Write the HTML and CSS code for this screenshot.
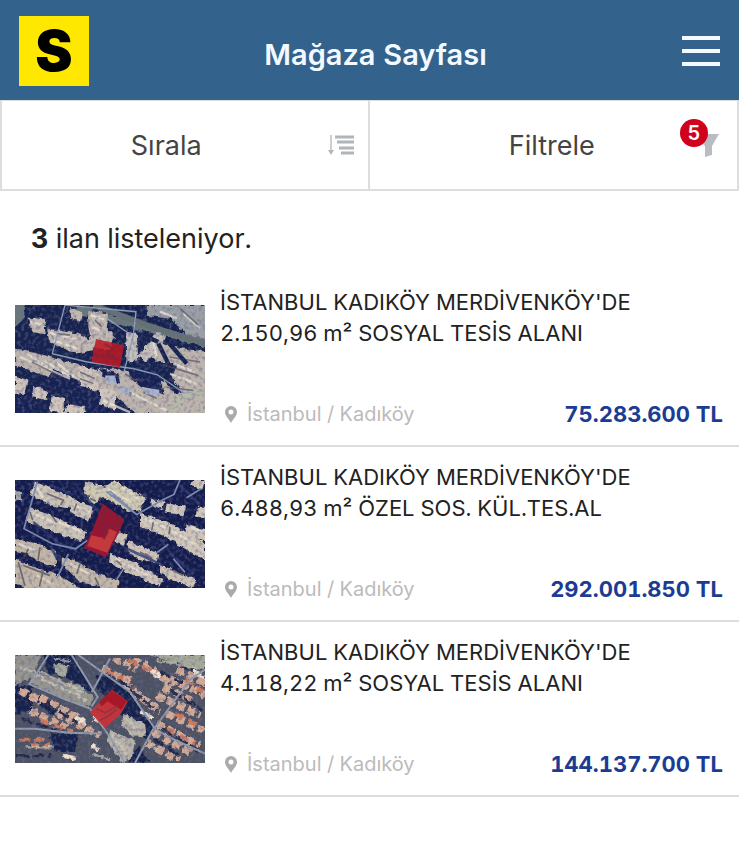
FILE: index.html
```html
<!DOCTYPE html>
<html lang="tr">
<head>
    <meta charset="UTF-8" />
    <title>Mağaza Sayfası</title>
    <meta name="viewport" content="width=device-width, initial-scale=1" />
    <link rel="stylesheet" href="styles.css">
</head>
<body>
    <header class="topbar">
        <a class="logo" href="#">S</a>
        <h1>Mağaza Sayfası</h1>
        <button class="menu-button" type="button" aria-label="Menü">
            <span></span>
            <span></span>
            <span></span>
        </button>
    </header>

    <div class="toolbar">
        <button class="tool" type="button">
            <span class="tool-label">Sırala</span>
            <svg class="tool-icon" width="28" height="22" viewBox="0 0 28 22" aria-hidden="true">
                <path d="M4 1v16" stroke="#cdcfd2" stroke-width="2" />
                <path d="M1 16h6l-3 5z" fill="#b4b6ba" />
                <path d="M8 3h19M10 8h17M12 14h15M14 19h13" stroke="#b1b4b8" stroke-width="3" />
            </svg>
        </button>
        <button class="tool" type="button">
            <span class="tool-label">Filtrele</span>
            <span class="tool-icon filter-icon">
                <svg width="28" height="22" viewBox="0 0 28 22" aria-hidden="true">
                    <path d="M1 0h26l-7 12v9l-7 2V12z" fill="#b9bcc0" />
                </svg>
                <span class="badge">5</span>
            </span>
        </button>
    </div>

    <main>
        <p class="result-count"><strong>3</strong> ilan listeleniyor.</p>

        <ul class="listings">
            <li class="listing">
                <svg class="thumb" viewBox="15 15 570 322" preserveAspectRatio="none" role="img" aria-label="Uydu görüntüsü">
                    <defs>
                        <filter id="rough" x="0" y="0" width="100%" height="100%">
                            <feTurbulence type="fractalNoise" baseFrequency="0.07" numOctaves="2" seed="4" result="n" />
                            <feDisplacementMap in="SourceGraphic" in2="n" scale="16" xChannelSelector="R" yChannelSelector="G" />
                        </filter>
                        <filter id="grain" x="0" y="0" width="100%" height="100%">
                            <feTurbulence type="fractalNoise" baseFrequency="0.09" numOctaves="2" seed="9" />
                            <feColorMatrix values="0 0 0 0 0.14  0 0 0 0 0.14  0 0 0 0 0.28  3 0 0 0 -1.4" />
                        </filter>
                    </defs>
                    <rect width="600" height="352" fill="#17234f" />
                    <g filter="url(#rough)">
                        <path d="M0 0h48L40 60 15 80zM200 15L450 85 600 120V145L470 110 330 75 200 40z" fill="#6b787a" />
                        <path d="M410 15h190v105l-70-15-45-48-75-10z" fill="#9aa0a4" />
                        <path d="M430 120l90 25 80 10v185H380l-60-50-60-10-50-35-80-10L15 195v-50l70 15 90 25 60 20 90 0 80 20 60 20 30 35 20-5-30-45 20-40-60-5-50-30z" fill="#bdb4ac" />
                        <path d="M355 200l85 8 25 75-70-25-35-25zM130 205l70 30 70 40 10 55-45 5-50-50-75-35zM270 205l55 15 5 30-45-15zM15 255l50 20 10 62H15z" fill="#172452" />
                        <path d="M235 30l60 10-5 45 25 25-15 40-55-10-10-60zM112 85l90 15 45 20v30l-50 10-80-35zM52 52l50 5 5 45-35-5-12-25zM180 22l38 15-4 28-30-8z" fill="#c2b9b0" />
                        <path d="M345 95l35 5 5 80-35 5zM440 95l28 15-18 40-45 35-25-20 30-25z" fill="#c6c0ba" />
                        <path d="M15 225l40 15-8 38-32 5zM70 255l40 15 2 28-45-8zM125 285l40 10-2 40h-45zM175 310l48 10 5 17h-65zM270 255l50 20-5 55-45-18zM205 195l60 15-5 65-50-20z" fill="#d0c5bb" />
                    </g>
                    <g stroke="#ece5da" stroke-width="7" fill="none" opacity=".75">
                        <path d="M60 65l35 8M120 98l80 20M130 120l72 25M240 45l42 12M245 80l25 10M30 170l150 65M50 160l65 42M100 178l80 52M140 188l60 46M280 300l80 35M350 270l80 40M390 290l80 40M490 190l65 25M480 220l80 30M430 120l10 55M520 40l50 45M450 35l50 20" />
                    </g>
                    <g stroke="#4c4a57" stroke-width="5" fill="none" opacity=".65">
                        <path d="M65 185l90 45M210 215l45 20M210 235l40 14M345 220l35 20M335 265l30 14M400 275l40 18M470 260l80 10M465 195l100 30M480 170l90 15M140 100l40 5M255 60l20 20M510 25l55 50" />
                    </g>
                    <path d="M285 225h30l6 28-32-8zM330 255l30 8-3 18-30-8zM400 260l48 8v18l-40-6z" fill="#a9b4cc" />
                    <path d="M470 120l60 70M445 130l30 60M400 105l45 20" stroke="#17234f" stroke-width="13" />
                    <path d="M250 15l175 65 95 30 80 24" stroke="#657173" stroke-width="17" fill="none" />
                    <path d="M165 15L127 160l105 25 140 20 70 18 82 55 76-4M127 160l38-145 213 20-8 70-28 110M290 55l75 50" stroke="#8e9fb8" stroke-width="4" fill="none" />
                    <path d="M585 275l-72 12-23 50" stroke="#b4bca5" stroke-width="12" fill="none" />
                    <rect width="600" height="352" filter="url(#grain)" opacity=".55" />
                    <path d="M258 116l84 20-12 65-86-17z" fill="#b91926" fill-opacity=".88" />
                    <path d="M285 132l22 12-14 18 22 8M250 162l74 16" stroke="#812235" stroke-width="7" fill="none" opacity=".7" />
                </svg>
                <div class="details">
                    <a class="title" href="#">İSTANBUL KADIKÖY MERDİVENKÖY'DE 2.150,96 m² SOSYAL TESİS ALANI</a>
                    <div class="meta">
                        <span class="location">
                            <svg width="12" height="17" viewBox="0 0 12 17" aria-hidden="true">
                                <path fill-rule="evenodd" d="M6 0a6 6 0 0 0-6 6c0 4 4 7 6 11 2-4 6-7 6-11a6 6 0 0 0-6-6zm0 3.5a2.5 2.5 0 1 1 0 5 2.5 2.5 0 0 1 0-5z" fill="#aaa" />
                            </svg>
                            İstanbul / Kadıköy
                        </span>
                        <strong class="price">75.283.600 TL</strong>
                    </div>
                </div>
            </li>

            <li class="listing">
                <svg class="thumb" viewBox="15 15 570 322" preserveAspectRatio="none" role="img" aria-label="Uydu görüntüsü">
                    <rect width="600" height="352" fill="#131c4c" />
                    <g filter="url(#rough)">
                        <path d="M75 20l60 25 60 25-15 30-50-8-68-30zM185 75l65 20-12 45-58-30zM60 98l70 25 100 45-18 32-85-32-82-30z" fill="#cbc4b6" />
                        <path d="M225 20l60 15 30-20 50 30 42 25-18 35-32 5-65-38-70-15zM235 55l35 5-8 25-25-5z" fill="#cfc8b1" />
                        <path d="M390 115l45 15 60 20 35 25 55 30v50l-60-35-65-40-70-25zM530 145l60 20v35l-65-20zM470 85l58 10-8 25-55-8zM420 70l45 10-8 22-32-12zM545 15h40l-8 28-37-12zM565 95h30v40l-38-15z" fill="#d0c7ba" />
                        <path d="M310 165l40 15-8 28-40-15zM355 195l90 40-5 28-60-15-30-25zM450 265l110 50-15 22-50-20-45-25zM300 235l70 25 90 50-8 22-75-30-80-40z" fill="#cec3b6" />
                        <path d="M15 190l55 12 65 25 5 45-45-10-50-30-30-5zM155 245l50 15 60 35 60 20v30l-115-25-55-55zM15 250l50 22 90 30 60 40H60l-45-20z" fill="#c2b6a7" />
                        <path d="M15 45l20 10 2 25-22-5z" fill="#a7a9ad" />
                    </g>
                    <g stroke="#eee7d6" stroke-width="7" fill="none" opacity=".65">
                        <path d="M80 35l25 45M190 90l50 20M70 115l65 28M145 140l70 30M290 40l80 45M335 35l50 35M405 130l65 28M485 165l70 42M540 155l45 18M315 250l110 55M25 205l50 20M180 265l60 32M80 300l50 25" />
                    </g>
                    <g stroke="#4a4650" stroke-width="5" fill="none" opacity=".7">
                        <path d="M110 55l50 20-8 15M125 120l15 22M60 110l8 25M200 85l-8 22M240 70l18 8M300 60l32 12M430 140l-5 25M480 155l-3 22M390 230l28 15M405 235l22 14M480 280l40 20M55 220l-15 30M90 215l-6 40M40 270l80 30M25 260l20 70M100 285l-12 48M210 265l-10 30M255 305l12 25M320 255l15 15" />
                    </g>
                    <g stroke="#28366e" stroke-width="8" fill="none" opacity=".8">
                        <path d="M70 140l80 65 50 20M200 35l70 80M510 30l60 60M120 30l70 30M340 215l120 55M120 210l25 45M450 190l60 80M500 250l50 45" />
                    </g>
                    <path d="M82 20L42 160l85 45 70 15 35-25M290 50l90 68 80-45 32-15 18-43M380 118l-80-70M175 235l-35 75M530 68l45-28M440 232l35-25M490 250l35 40M320 312l20-32" stroke="#8190b2" stroke-width="5" fill="none" />
                    <rect width="600" height="352" filter="url(#grain)" opacity=".5" />
                    <path d="M278 85l65 48-18 42-38 70-65-27 28-60z" fill="#9e1532" fill-opacity=".93" />
                    <path d="M298 160l22 10-28 62-60-20 12-32 36 8z" fill="#cf423e" opacity=".8" />
                    <path d="M285 102l46 32-15 25-42-18zM265 150l28 20-12 22" stroke="#79233e" stroke-width="5" fill="none" />
                </svg>
                <div class="details">
                    <a class="title" href="#">İSTANBUL KADIKÖY MERDİVENKÖY'DE 6.488,93 m² ÖZEL SOS. KÜL.TES.AL</a>
                    <div class="meta">
                        <span class="location">
                            <svg width="12" height="17" viewBox="0 0 12 17" aria-hidden="true">
                                <path fill-rule="evenodd" d="M6 0a6 6 0 0 0-6 6c0 4 4 7 6 11 2-4 6-7 6-11a6 6 0 0 0-6-6zm0 3.5a2.5 2.5 0 1 1 0 5 2.5 2.5 0 0 1 0-5z" fill="#aaa" />
                            </svg>
                            İstanbul / Kadıköy
                        </span>
                        <strong class="price">292.001.850 TL</strong>
                    </div>
                </div>
            </li>

            <li class="listing">
                <svg class="thumb" viewBox="15 15 570 322" preserveAspectRatio="none" role="img" aria-label="Uydu görüntüsü">
                    <rect width="600" height="352" fill="#4d5263" />
                    <g filter="url(#rough)">
                        <path d="M100 15h90l60 115-75-45-60-15zM260 75l50 10 60 55 60 85-20 45-85-85-65-70zM15 100l50 10 5 65-55 20zM90 130l55 25-15 45-48-45zM120 245l85 10-10 50-60-5zM385 285l40 50h-70z" fill="#17234c" />
                        <path d="M15 15h80l-35 70-45 20zM60 60l80 30 110 45-10 35-75-20-100-50z" fill="#96958e" />
                        <path d="M130 40l45 5-8 35-35-10zM180 95l45 20-10 30-40-15zM420 15h165v45l-90-20z" fill="#a6aa98" />
                        <path d="M340 190l65 30 5 35-45 5-30-40zM300 240l75 30-10 55-30 10-45-65z" fill="#b9b4a7" />
                    </g>
                    <!-- rooftops, drawn as dashed rows -->
                    <g filter="url(#rough)" fill="none">
                        <path d="M275 55l85 40M340 100l110 85M370 25l120 80M310 25l70 30M500 60l85 40M480 85l105 50M460 110l90 45M440 135l130 60M470 190l110 50M440 220l130 65M430 245l120 65M410 275l95 55M90 140l120 65M60 180l110 50M140 185l130 70M30 120l65 35" stroke="#d3ab95" stroke-width="22" stroke-dasharray="25 9" />
                        <path d="M355 30l85 38M525 90l55 35M470 235l85 45M30 268h80M60 285h60M495 190l70 35M285 60l55 25M90 210l100 35" stroke="#cf7a5c" stroke-width="12" stroke-dasharray="28 16" />
                        <path d="M285 72l80 40M360 120l80 60M480 120l100 60M455 235l110 65M430 265l80 50M105 160l100 60M35 205l105 35M450 65l70 35M500 40l85 40M20 315h110" stroke="#202a4b" stroke-width="9" stroke-dasharray="38 10" />
                        <path d="M75 75l155 75M90 65l140 65M350 205l40 40M310 255l42 60M30 55l45 10M135 25l50 12M440 30l120 24M415 280l28 18M50 290h80M250 310l50 20" stroke="#d2ccbb" stroke-width="7" opacity=".7" />
                        <path d="M250 205l25 8M195 200l30 16M420 60l35 20M550 65l35 18M390 185l40 20M245 285l20 12M160 315l35 8" stroke="#f0e0cf" stroke-width="13" />
                    </g>
                    <path d="M185 15l78 125-18 28M205 15l155 110 75 110 40 24 110 50M430 235L375 337M435 232l65-90 42-54 43-30M300 25l-40 75-15 25M55 100l105 45 80 30 60 85 45 77M60 100L115 15M15 235h60l100 12 100 2" stroke="#929dad" stroke-width="6" fill="none" />
                    <rect width="600" height="352" filter="url(#grain)" opacity=".55" />
                    <path d="M305 118l48 35-20 37-48 43-45-48 40-40z" fill="#c8333a" fill-opacity=".95" />
                    <path d="M304 120l47 32-18 26-40-25-18 15-8-12z" fill="#a61727" />
                    <path d="M258 175l28 12 36-20M268 210l28-14 24-18" stroke="#94323b" stroke-width="5" fill="none" />
                </svg>
                <div class="details">
                    <a class="title" href="#">İSTANBUL KADIKÖY MERDİVENKÖY'DE 4.118,22 m² SOSYAL TESİS ALANI</a>
                    <div class="meta">
                        <span class="location">
                            <svg width="12" height="17" viewBox="0 0 12 17" aria-hidden="true">
                                <path fill-rule="evenodd" d="M6 0a6 6 0 0 0-6 6c0 4 4 7 6 11 2-4 6-7 6-11a6 6 0 0 0-6-6zm0 3.5a2.5 2.5 0 1 1 0 5 2.5 2.5 0 0 1 0-5z" fill="#aaa" />
                            </svg>
                            İstanbul / Kadıköy
                        </span>
                        <strong class="price">144.137.700 TL</strong>
                    </div>
                </div>
            </li>
        </ul>
    </main>
</body>
</html>
```

FILE: styles.css
```css
* {
    box-sizing: border-box;
}

body {
    margin: 0;
    font-family: Inter, "Noto Sans", sans-serif;
    font-variant-numeric: tabular-nums;
    background-color: #fff;
    color: #222;
}

button {
    font: inherit;
    color: inherit;
    border: 0;
    background: none;
    cursor: pointer;
}

.topbar {
    display: grid;
    grid-template-columns: 70px 1fr 70px;
    align-items: center;
    padding: 16px 19px 14px;
    background-color: #33628d;
    color: #f3f9ff;
}

.logo {
    display: flex;
    align-items: center;
    justify-content: center;
    height: 70px;
    background-color: #ffe800;
    color: #000;
    font-size: 56px;
    line-height: 70px;
    font-weight: 900;
    text-decoration: none;
}

.topbar h1 {
    margin: 8px 0 0;
    padding-left: 12px;
    font-size: 29px;
    line-height: 36px;
    font-weight: 600;
    text-align: center;
}

.menu-button {
    display: flex;
    flex-direction: column;
    justify-self: end;
    gap: 9px;
    padding: 0;
}

    .menu-button span {
        width: 38px;
        height: 4px;
        background-color: #f3f9ff;
    }

.toolbar {
    display: grid;
    grid-template-columns: 1fr 1fr;
    border: 2px solid #ddd;
    border-top-width: 1px;
}

.tool {
    display: grid;
    grid-template-columns: 1fr 28px;
    align-items: center;
    height: 88px;
    padding: 0 13px 0 4px;
    border-right: 2px solid #ddd;
    color: #444;
    font-size: 27px;
}

    .tool + .tool {
        padding: 0 17px 0 42px;
        border-right: 0;
    }

.tool-icon {
    display: block;
}

.filter-icon {
    position: relative;
    height: 22px;
}

    .filter-icon svg {
        display: block;
        overflow: visible;
    }

.badge {
    position: absolute;
    top: -15px;
    left: -12px;
    width: 28px;
    height: 28px;
    border-radius: 50%;
    background-color: #d0021b;
    color: #fff;
    font-size: 20px;
    line-height: 28px;
    font-weight: 600;
    text-align: center;
}

.result-count {
    margin: 0;
    padding: 32px 31px 17px;
    font-size: 27px;
    line-height: 32px;
}

.listings {
    margin: 0;
    padding: 0;
    list-style: none;
}

.listing {
    display: flex;
    align-items: center;
    gap: 15px;
    height: 175px;
    padding: 0 16px 0 15px;
    border-bottom: 2px solid #ddd;
}

.thumb {
    flex: none;
    width: 190px;
    height: 108px;
}

.details {
    display: flex;
    flex: 1;
    flex-direction: column;
    justify-content: space-between;
    align-self: stretch;
    padding: 15px 0;
}

.title {
    max-width: 430px;
    color: #222;
    font-size: 22px;
    line-height: 31px;
    text-decoration: none;
}

.meta {
    display: flex;
    align-items: center;
    justify-content: space-between;
    line-height: 32px;
}

.location {
    display: flex;
    align-items: center;
    gap: 10px;
    padding-left: 5px;
    color: #bbb;
    font-size: 20px;
}

.price {
    color: #1c3c94;
    font-size: 22px;
    font-weight: 700;
}
```
